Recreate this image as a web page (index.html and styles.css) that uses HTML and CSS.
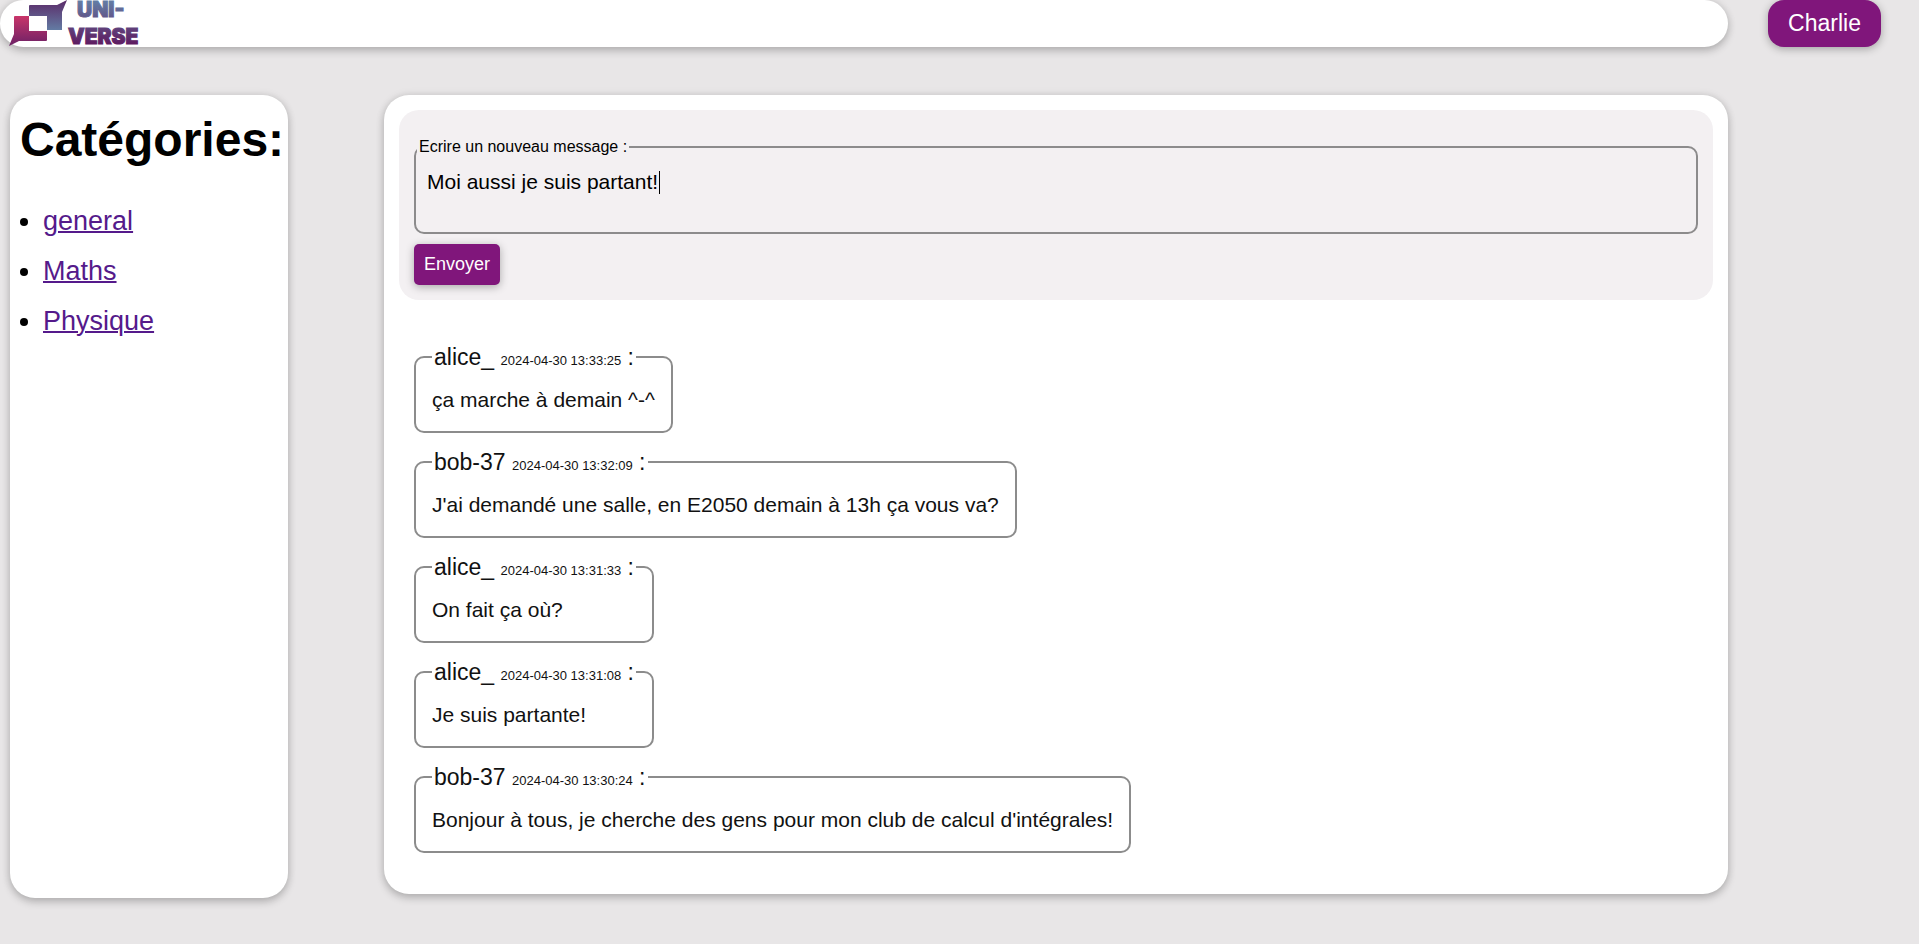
FILE: index.html
```html
<!DOCTYPE html>
<html lang="fr">
<head>
<meta charset="utf-8">
<title>Uni-verse</title>
<link rel="stylesheet" href="styles.css">
</head>
<body>
<div class="page">
  <header class="topbar">
    <a class="logo" href="#" aria-label="Uni-verse">
      <svg class="logo-mark" viewBox="0 0 60 47" aria-hidden="true">
        <defs>
          <linearGradient id="mark-red" x1="0" y1="0" x2="0" y2="1"><stop offset="0" stop-color="#c9356a"/><stop offset="1" stop-color="#6b2166"/></linearGradient>
          <linearGradient id="mark-blue" x1="0" y1="0" x2="0" y2="1"><stop offset="0" stop-color="#5b2a68"/><stop offset="1" stop-color="#637ba3"/></linearGradient>
        </defs>
        <path fill="url(#mark-red)" d="M7 16H21V31H39V40Q39 41 38 41H11L1 46L6 34V17Q6 16 7 16Z"/>
        <path fill="url(#mark-blue)" d="M22 5H49L59 0L54 12V30H39V16H21V6Q21 5 22 5Z"/>
      </svg>
      <svg class="logo-text" viewBox="0 0 76 47" aria-hidden="true">
        <defs>
          <linearGradient id="word" gradientUnits="userSpaceOnUse" x1="0" y1="2" x2="0" y2="44"><stop offset="0" stop-color="#637ba3"/><stop offset="1" stop-color="#5e1c61"/></linearGradient>
        </defs>
        <g fill="url(#word)" stroke="url(#word)">
          <text x="9" y="17">UNI-</text>
          <text x="0" y="44">VERSE</text>
        </g>
      </svg>
    </a>
  </header>
  <button class="user" type="button">Charlie</button>

  <nav class="sidebar">
    <h1 class="sidebar-title">Catégories:</h1>
    <ul class="categories">
      <li><a href="#">general</a></li>
      <li><a href="#">Maths</a></li>
      <li><a href="#">Physique</a></li>
    </ul>
  </nav>

  <main class="feed">
    <form class="composer">
      <fieldset class="field">
        <legend><label for="message">Ecrire un nouveau message :</label></legend>
        <textarea id="message" class="field-input" rows="2">Moi aussi je suis partant!</textarea>
      </fieldset>
      <button class="send" type="button">Envoyer</button>
    </form>
    <div class="messages">
      <fieldset class="message"><legend>alice_ <time>2024-04-30 13:33:25</time> :</legend><p>ça marche à demain ^-^</p></fieldset>
      <fieldset class="message"><legend>bob-37 <time>2024-04-30 13:32:09</time> :</legend><p>J'ai demandé une salle, en E2050 demain à 13h ça vous va?</p></fieldset>
      <fieldset class="message"><legend>alice_ <time>2024-04-30 13:31:33</time> :</legend><p>On fait ça où?</p></fieldset>
      <fieldset class="message"><legend>alice_ <time>2024-04-30 13:31:08</time> :</legend><p>Je suis partante!</p></fieldset>
      <fieldset class="message"><legend>bob-37 <time>2024-04-30 13:30:24</time> :</legend><p>Bonjour à tous, je cherche des gens pour mon club de calcul d'intégrales!</p></fieldset>
    </div>
  </main>
</div>
</body>
</html>
```
FILE: styles.css
```css
* { box-sizing: border-box; }

body {
  margin: 0;
  background: #e8e6e7;
  color: #111;
  font-family: "Liberation Sans", Arial, sans-serif;
}

.page {
  display: grid;
  grid-template-columns: 288px minmax(0, 1fr) 113px;
  column-gap: 40px;
  row-gap: 48px;
  padding: 0 38px 40px 0;
}

.topbar,
.sidebar,
.feed {
  background: #fff;
  box-shadow: 0 4px 8px rgba(0, 0, 0, 0.2), 0 0 8px rgba(0, 0, 0, 0.1);
}

.topbar {
  grid-column: 1 / 3;
  height: 47px;
  border-radius: 24px;
}

.logo {
  display: flex;
  padding-left: 8px;
}

.logo-mark { width: 60px; height: 47px; }

.logo-text {
  width: 76px;
  height: 47px;
  overflow: visible;
  font: 900 21px Inter, sans-serif;
}

.user {
  height: 47px;
  border: 0;
  border-radius: 16px;
  background: #80167b;
  color: #fff;
  font: 23px "Liberation Sans", Arial, sans-serif;
  box-shadow: 0 2px 8px rgba(0, 0, 0, 0.3);
}

.sidebar {
  grid-column: 1;
  min-height: 803px;
  margin-left: 10px;
  padding: 17px 4px 0 10px;
  border-radius: 25px;
}

.sidebar-title {
  margin: 0;
  color: #000;
  font-size: 48px;
  line-height: 56px;
}

.categories {
  margin: 28px 0 0;
  padding-left: 23px;
  color: #000;
  font-size: 27px;
  line-height: 50px;
}

.categories a {
  color: #551a8b;
  text-decoration-thickness: 2px;
}

.feed {
  grid-column: 2;
  align-self: start;
  margin-left: 56px;
  padding: 15px 15px 41px;
  border-radius: 25px;
}

.composer {
  padding: 28px 15px 15px;
  border-radius: 20px;
  background: #f3f0f2;
}

.field {
  margin: 0 0 10px;
  padding: 0 1px;
  border: 2px solid #8c8b8c;
  border-radius: 10px;
}

.field legend {
  padding: 0 2px;
  color: #000;
  font-size: 16px;
  line-height: 18px;
}

/* The thin gradient is the text cursor after the draft. */
.field-input {
  display: block;
  width: 100%;
  height: 76px;
  padding: 13px 10px;
  border: 0;
  outline: 0;
  resize: none;
  background: linear-gradient(#000, #000) 242px 15px / 1px 23px no-repeat;
  color: #000;
  font: 21px/26px "Liberation Sans", Arial, sans-serif;
}

.send {
  display: block;
  height: 41px;
  padding: 0 10px;
  border: 0;
  border-radius: 5px;
  background: #80167b;
  color: #fff;
  font: 18px "Liberation Sans", Arial, sans-serif;
  box-shadow: 0 2px 8px rgba(0, 0, 0, 0.3);
}

.messages {
  display: flex;
  flex-direction: column;
  align-items: flex-start;
  gap: 16px;
  padding: 44px 15px 0;
}

.message {
  margin: 0;
  padding: 0 16px;
  border: 2px solid #8c8c8c;
  border-radius: 10px;
}

.message legend {
  padding: 0 2px;
  font-size: 23px;
  line-height: 26px;
}

.message time {
  font-size: 13px;
  line-height: 1;
}

.message p {
  margin: 0;
  padding: 17px 0 18px;
  font-size: 21px;
  line-height: 26px;
}
```
